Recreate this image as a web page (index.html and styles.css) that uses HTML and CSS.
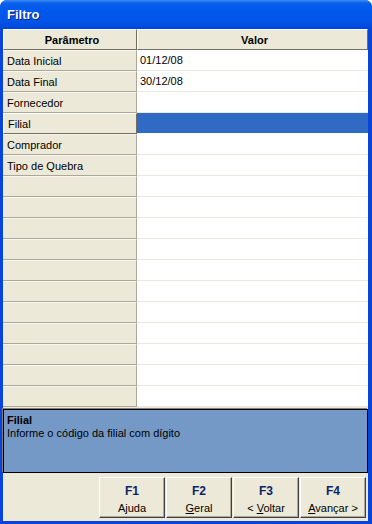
FILE: index.html
```html
<!DOCTYPE html>
<html lang="pt">
<head>
    <meta charset="UTF-8">
    <title>Filtro</title>
    <link rel="stylesheet" href="styles.css">
</head>
<body>
<div class="window">
    <div class="titlebar">Filtro</div>
    <div class="client">
        <div class="grid">
            <div class="head">Parâmetro</div>
            <div class="head">Valor</div>

            <div class="param">Data Inicial</div><div class="val">01/12/08</div>
            <div class="param">Data Final</div><div class="val">30/12/08</div>
            <div class="param">Fornecedor</div><div class="val"></div>
            <div class="param sel">Filial</div><div class="val sel"></div>
            <div class="param">Comprador</div><div class="val"></div>
            <div class="param">Tipo de Quebra</div><div class="val"></div>
            <div class="param"></div><div class="val"></div>
            <div class="param"></div><div class="val"></div>
            <div class="param"></div><div class="val"></div>
            <div class="param"></div><div class="val"></div>
            <div class="param"></div><div class="val"></div>
            <div class="param"></div><div class="val"></div>
            <div class="param"></div><div class="val"></div>
            <div class="param"></div><div class="val"></div>
            <div class="param"></div><div class="val"></div>
            <div class="param"></div><div class="val"></div>
            <div class="param"></div><div class="val"></div>
        </div>
        <div class="info">
            <b>Filial</b>
            <div>Informe o código da filial com dígito</div>
        </div>
        <div class="btns">
            <button><b>F1</b><span>Ajuda</span></button>
            <button><b>F2</b><span><u>G</u>eral</span></button>
            <button><b>F3</b><span>&lt; <u>V</u>oltar</span></button>
            <button><b>F4</b><span><u>A</u>vançar &gt;</span></button>
        </div>
    </div>
</div>
</body>
</html>
```

FILE: styles.css
```css
* {
    margin: 0;
    padding: 0;
    box-sizing: border-box;
}

body {
    width: 372px;
    height: 524px;
    overflow: hidden;
    font-family: "Liberation Sans", Arial, sans-serif;
    font-size: 11px;
}

.window {
    display: flex;
    flex-direction: column;
    width: 372px;
    height: 524px;
    background: #0843dc;
    border-radius: 7px 7px 0 0;
    padding: 0 4px 3px 3px;
}

.titlebar {
    height: 29px;
    margin: 0 -4px 0 -3px;
    padding: 7px 0 0 7px;
    border-radius: 7px 7px 0 0;
    background: linear-gradient(#3d8ef7 0, #0a60e8 3px, #0058ee 10px, #0453e6 22px, #0046d8 29px);
    color: #fff;
    font-size: 13px;
    font-weight: bold;
    text-shadow: 1px 1px 0 #0a1e80;
}

.client {
    flex: 1;
    display: flex;
    flex-direction: column;
    background: #ece9d8;
}

.grid {
    display: grid;
    grid-template-columns: 134px 1fr;
    grid-auto-rows: 21px;
    background: #fff;
}

.grid div {
    display: flex;
    align-items: center;
    padding-left: 4px;
    white-space: nowrap;
}

.head {
    justify-content: center;
    font-weight: bold;
    background: #ece9d8;
    border: 1px solid;
    border-color: #fff #716f64 #716f64 #fff;
}

.param {
    background: #ece9d8;
    border-right: 1px solid #aca899;
    border-bottom: 1px solid #aca899;
    border-top: 1px solid #f7f6f0;
}

.param.sel {
    border: 1px solid;
    border-color: #fff #716f64 #716f64 #fff;
}

.grid .val {
    padding-left: 3px;
    border-bottom: 1px solid #ebe8dc;
}

.val.sel {
    background: #316ac5;
    border-bottom-color: #fff;
}

.info {
    height: 64px;
    margin-top: 2px;
    padding: 4px 3px;
    background: #7599c7;
    border: 1px solid #000;
    box-shadow: -1px -1px 0 #808080;
    line-height: 13px;
}

.btns {
    flex: 1;
    display: flex;
    justify-content: flex-end;
    gap: 1px;
    padding: 4px 2px 3px 0;
}

.btns button {
    width: 66px;
    display: flex;
    flex-direction: column;
    align-items: center;
    justify-content: center;
    gap: 4px;
    padding-top: 3px;
    font-family: "Liberation Sans", Arial, sans-serif;
    font-size: 11px;
    color: #000;
    background: #ece9d8;
    border: 1px solid;
    border-color: #fff #404040 #404040 #fff;
    box-shadow: inset -1px -1px 0 #aca899;
}

.btns b {
    color: #0a246a;
    font-size: 12px;
}
```
